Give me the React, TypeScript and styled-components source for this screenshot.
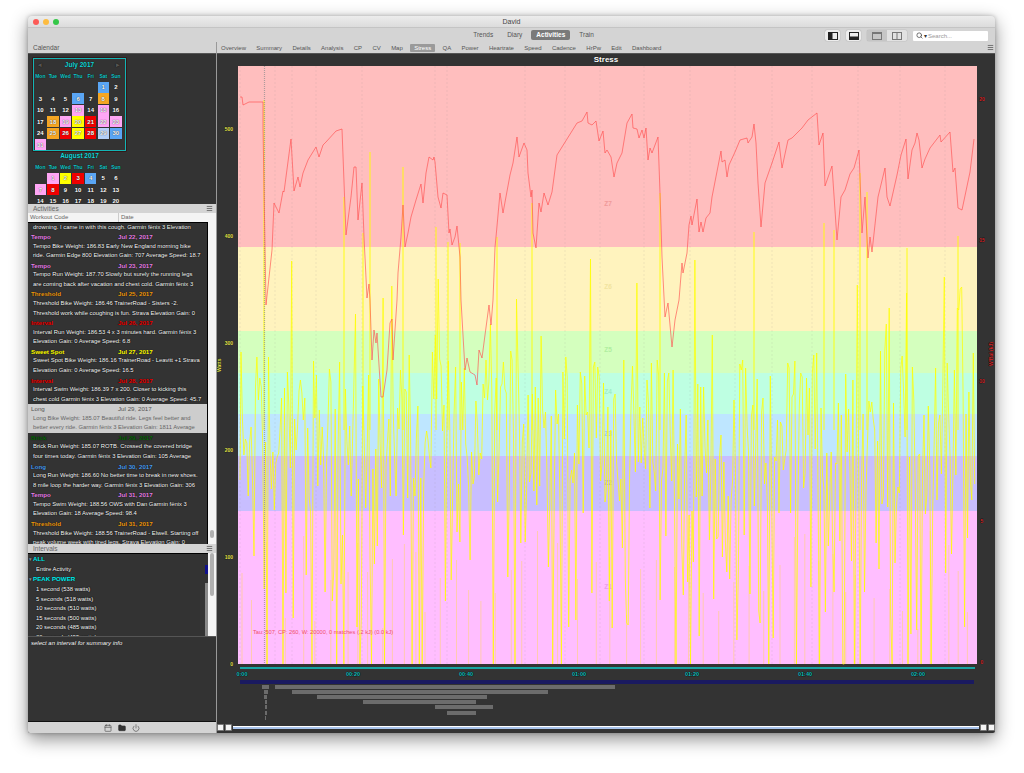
import React, {FunctionComponent} from "react";
import styled, {createGlobalStyle} from "styled-components";
import {Calendar as CalendarIcon, Folder, Menu, Power, Search} from "lucide-react";

const FONT = `"Liberation Sans", Arial, sans-serif`;

const GlobalStyle = createGlobalStyle`
  html, body {
    margin: 0;
    height: 100%;
    background: #fff;
    overflow: hidden;
  }
  body {
    font-family: ${FONT};
  }
`;

const SECTIONS = ["Trends", "Diary", "Activities", "Train"];
const TABS = ["Overview", "Summary", "Details", "Analysis", "CP", "CV", "Map", "Stress", "QA", "Power", "Heartrate", "Speed", "Cadence", "HrPw", "Edit", "Dashboard"];

const BLUE = "#5aa6f5", ORANGE = "#f5a623", PINK = "#ffa6f5", YELLOW = "#ffff00", RED = "#f00000", PALE = "#b4d0f7";

const JULY: Record<number, string> = {1: BLUE, 6: BLUE, 8: ORANGE, 13: PINK, 15: PINK, 18: ORANGE, 19: PINK, 20: YELLOW, 21: RED, 22: PINK, 23: PINK, 25: ORANGE, 26: RED, 27: YELLOW, 28: RED, 29: PALE, 30: BLUE, 31: PINK};
const AUGUST: Record<number, string> = {1: PINK, 2: YELLOW, 3: RED, 4: BLUE, 7: PINK, 8: RED};

const TEMPO = "#e67fe6", THRESHOLD = "#f09a10", INTERVAL = "#f00000", SWEET = "#ffff00", LONG = "#4a9cf0", BRICK = "#0c6a0c";

const ACTIVITIES = [
    {name: "Tempo", date: "Jul 22, 2017", color: TEMPO, lines: ["Tempo Bike Weight: 186.83 Early New England morning bike", "ride. Garmin Edge 800 Elevation Gain: 707 Average Speed: 18.7"]},
    {name: "Tempo", date: "Jul 23, 2017", color: TEMPO, lines: ["Tempo Run Weight: 187.70 Slowly but surely the running legs", "are coming back after vacation and chest cold. Garmin fēnix 3"]},
    {name: "Threshold", date: "Jul 25, 2017", color: THRESHOLD, lines: ["Threshold Bike Weight: 186.46 TrainerRoad - Sisters -2.", "Threshold work while coughing is fun. Strava Elevation Gain: 0"]},
    {name: "Interval", date: "Jul 26, 2017", color: INTERVAL, lines: ["Interval Run Weight: 186.53 4 x 3 minutes hard. Garmin fēnix 3", "Elevation Gain: 0 Average Speed: 6.8"]},
    {name: "Sweet Spot", date: "Jul 27, 2017", color: SWEET, lines: ["Sweet Spot Bike Weight: 186.16 TrainerRoad - Leavitt +1 Strava", "Elevation Gain: 0 Average Speed: 16.5"]},
    {name: "Interval", date: "Jul 28, 2017", color: INTERVAL, lines: ["Interval Swim Weight: 186.39 7 x 200. Closer to kicking this", "chest cold Garmin fēnix 3 Elevation Gain: 0 Average Speed: 45.7"]},
    {name: "Long", date: "Jul 29, 2017", color: "#555", selected: true, lines: ["Long Bike Weight: 185.07 Beautiful ride. Legs feel better and", "better every ride. Garmin fēnix 3 Elevation Gain: 1811 Average"]},
    {name: "Brick", date: "Jul 29, 2017", color: BRICK, lines: ["Brick Run Weight: 185.07 ROTB. Crossed the covered bridge", "four times today. Garmin fēnix 3 Elevation Gain: 105 Average"]},
    {name: "Long", date: "Jul 30, 2017", color: LONG, lines: ["Long Run Weight: 186.60 No better time to break in new shoes.", "8 mile loop the harder way. Garmin fēnix 3 Elevation Gain: 306"]},
    {name: "Tempo", date: "Jul 31, 2017", color: TEMPO, lines: ["Tempo Swim Weight: 188.56 OWS with Dan Garmin fēnix 3", "Elevation Gain: 18 Average Speed: 98.4"]},
    {name: "Threshold", date: "Jul 31, 2017", color: THRESHOLD, lines: ["Threshold Bike Weight: 188.56 TrainerRoad - Elwell. Starting off", "peak volume week with tired legs. Strava Elevation Gain: 0"]},
];

const PEAKS = ["1 second (538 watts)", "5 seconds (518 watts)", "10 seconds (510 watts)", "15 seconds (500 watts)", "20 seconds (485 watts)", "30 seconds (455 watts)"];

const ZONES = [
    {name: "Z7", top: 66, bottom: 247, fill: "#ffbebe", ink: "#f09a9a", labelY: 206},
    {name: "Z6", top: 247, bottom: 331, fill: "#fff3be", ink: "#f2e4a0", labelY: 289},
    {name: "Z5", top: 331, bottom: 373, fill: "#d4ffbe", ink: "#b0eea0", labelY: 352},
    {name: "Z4", top: 373, bottom: 414, fill: "#beffe2", ink: "#a0eec8", labelY: 394},
    {name: "Z3", top: 414, bottom: 456, fill: "#bee6ff", ink: "#9cc8e8", labelY: 436},
    {name: "Z2", top: 456, bottom: 511, fill: "#c8beff", ink: "#a89cec", labelY: 485},
    {name: "Z1", top: 511, bottom: 664, fill: "#ffbeff", ink: "#eaa0ea", labelY: 589},
];

const STRESS_LINE = "240,97 242,97 243,105 249,102 261,102 263,102 263,128 266,305 272,250 274,203 279,213 283,191 284,192 291,139 294,191 298,177 300,187 303,173 308,160 316,147 319,157 323,145 326,142 336,131 342,129 346,235 351,197 354,167 356,167 358,220 362,183 364,237 367,298 369,284 370,300 372,360 374,330 376,343 377,333 381,397 383,397 387,370 390,323 392,319 393,360 397,300 398,273 401,237 403,205 405,247 408,233 411,217 416,200 421,184 423,203 426,173 429,157 433,160 434,157 435,162 438,197 441,208 443,193 447,195 449,233 450,229 452,245 455,237 457,226 460,257 461,300 465,370 467,358 470,372 475,375 477,385 479,350 482,358 485,335 489,305 491,325 493,300 495,247 496,237 500,193 503,213 510,175 513,163 517,137 519,157 524,143 527,150 528,173 531,197 532,190 533,233 536,248 539,203 541,212 544,193 548,205 552,192 557,155 577,123 582,121 587,112 588,123 592,125 596,121 599,141 603,131 605,153 607,150 611,157 614,177 617,163 622,153 627,123 632,114 633,128 637,129 639,138 642,130 644,138 646,128 648,160 650,148 652,153 658,137 660,193 662,257 665,317 668,303 672,347 675,320 679,300 682,263 683,273 687,253 689,225 691,216 692,225 697,199 699,232 701,222 703,232 706,218 710,213 712,197 721,151 722,162 725,160 727,177 729,165 735,152 740,140 747,138 748,143 752,137 754,124 756,143 758,183 761,227 765,183 772,163 779,142 782,168 788,140 792,138 802,128 808,120 817,113 819,145 823,133 825,186 832,166 837,240 841,197 845,190 850,174 854,168 859,150 862,233 865,197 868,258 870,237 872,252 878,197 885,168 887,197 890,206 897,175 901,155 906,139 908,179 912,150 915,143 917,133 919,140 922,168 925,159 930,148 940,135 941,142 950,132 953,172 955,168 958,208 962,210 970,172 974,139";

const BIG_SPIKES = [[264, 100], [344, 197], [363, 233], [370, 152], [403, 167], [436, 227], [448, 242], [460, 243], [497, 237], [532, 203], [660, 193], [754, 232], [824, 223], [834, 230], [860, 173], [867, 192], [907, 248], [958, 236]];

const INTERVAL_BARS = [
    [275, 615, 685], [262, 269, 685],
    [292, 548, 690], [264, 268, 690],
    [317, 487, 695], [264, 267, 695],
    [363, 476, 700], [265, 267, 700],
    [435, 493, 705], [265, 267, 705],
    [447, 476, 711], [265, 267, 711],
    [265, 266, 716],
];

const MARKERS = [240, 275, 292, 316, 362, 435, 447, 525, 565, 600, 644, 690, 735, 772, 812, 858, 900, 945];
const TIME_TICKS = [["0:00", 242], ["00:20", 353], ["00:40", 466], ["01:00", 579], ["01:20", 692], ["01:40", 805], ["02:00", 918]] as const;
const WATT_TICKS = [[500, 129], [400, 236], [300, 343], [200, 450], [100, 557], [0, 664]];
const RIGHT_TICKS = [[20, 99], [15, 240], [10, 381], [5, 521], [0, 662]];

// seeded, so the picture is the same on every load
const makeRandom = (seed: number) => () => {
    seed = (seed + 0x6d2b79f5) | 0;
    let t = Math.imul(seed ^ (seed >>> 15), 1 | seed);
    t = (t + Math.imul(t ^ (t >>> 7), 61 | t)) ^ t;
    return ((t ^ (t >>> 14)) >>> 0) / 4294967296;
};

const buildPower = () => {
    const rand = makeRandom(2017);
    let d = "M240 480";
    for(let x = 241; x < 975; x += 1.45) {
        const r = rand();
        let y = 350 + rand() * 165;
        if(r < 0.03) y = 255 + rand() * 85;
        else if(r < 0.09) y = 664;
        else if(r < 0.22) y = 530 + rand() * 110;
        d += `L${x.toFixed(1)} ${y.toFixed(0)}`;
    }
    return d;
};

const buildPale = () => {
    const rand = makeRandom(77);
    let d = "";
    for(let x = 242; x < 975; x += 9 + rand() * 12) {
        d += `M${x.toFixed(1)} 664V${(530 + rand() * 100).toFixed(0)}`;
    }
    return d;
};

const POWER_PATH = buildPower();
const PALE_PATH = buildPale();

const Month: FunctionComponent<{title: string, offset: number, days: number, colors: Record<number, string>, boxed?: boolean}> = ({title, offset, days, colors, boxed}) => (
    <MonthBox $boxed={boxed}>
        <MonthTitle>
            <MonthArrow>{boxed && "◂"}</MonthArrow>
            {title}
            <MonthArrow>{boxed && "▸"}</MonthArrow>
        </MonthTitle>
        <DayGrid>
            {["Mon", "Tue", "Wed", "Thu", "Fri", "Sat", "Sun"].map(d => <WeekDay key={d}>{d}</WeekDay>)}
            {Array.from({length: offset}, (_, i) => <span key={i} />)}
            {Array.from({length: days}, (_, i) => <Day key={i} $color={colors[i + 1]}>{i + 1}</Day>)}
        </DayGrid>
    </MonthBox>
);

const ToolGlyph: FunctionComponent<{kind: "left" | "bottom" | "single" | "split"}> = ({kind}) => (
    <svg width="10" height="8" viewBox="0 0 10 8">
        <rect x="0.5" y="0.5" width="9" height="7" fill="none" stroke={kind === "left" || kind === "bottom" ? "#222" : "#777"} />
        {kind === "left" && <rect x="1" y="1" width="3.5" height="6" fill="#222" />}
        {kind === "bottom" && <rect x="1" y="4.5" width="8" height="2.5" fill="#222" />}
        {kind === "single" && <rect x="1" y="1" width="8" height="1" fill="#777" />}
        {kind === "split" && <path d="M5 1v6" stroke="#777" />}
    </svg>
);

const StressChart: FunctionComponent = () => (
    <Chart viewBox="217 65 778 657" width="778" height="657">
        {ZONES.map(z => <rect key={z.name} x="238" y={z.top} width="739" height={z.bottom - z.top} fill={z.fill} />)}
        {ZONES.map(z => <ZoneLabel key={z.name} x="608" y={z.labelY} fill={z.ink}>{z.name}</ZoneLabel>)}
        {MARKERS.map(x => <line key={x} x1={x} x2={x} y1="66" y2="664" stroke="#999" strokeOpacity="0.3" strokeWidth="0.5" strokeDasharray="2 2" />)}
        <path d={PALE_PATH} stroke="#ffd27a" strokeWidth="0.8" fill="none" opacity="0.75" />
        <path d={POWER_PATH} stroke="#ffff00" strokeWidth="0.75" fill="none" />
        {BIG_SPIKES.map(([x, y]) => <line key={x} x1={x} x2={x} y1={y} y2="430" stroke="#ffff00" strokeWidth="0.9" />)}
        <line x1="264.5" x2="264.5" y1="66" y2="664" stroke="#8c8c8c" strokeWidth="1.2" strokeDasharray="1 1" opacity="0.7" />
        <polyline points={STRESS_LINE} fill="none" stroke="#ff4d4d" strokeWidth="0.75" opacity="0.85" />
        <TauText x="253" y="634">Tau: 507, CP: 260, W: 20000, 0 matches (.2 kJ) (0.0 kJ)</TauText>

        {WATT_TICKS.map(([v, y]) => <AxisText key={v} x="233" y={y + 2} textAnchor="end" fill="#e6e650">{v}</AxisText>)}
        <AxisText x="0" y="0" transform="translate(221 372) rotate(-90)" fill="#e6e650">Watts</AxisText>
        {RIGHT_TICKS.map(([v, y]) => <AxisText key={v} x="982" y={y + 2} textAnchor="middle" fill="#d82828">{v}</AxisText>)}
        <AxisText x="0" y="0" transform="translate(993 366) rotate(-90)" fill="#d82828">W'Bal (kJ)</AxisText>

        <rect x="240" y="667" width="735" height="2" fill="#16a5a5" />
        {TIME_TICKS.map(([t, x]) => <TimeText key={t} x={x} y="676" textAnchor="middle">{t}</TimeText>)}
        <rect x="240" y="680" width="734" height="4" fill="#1a1a60" />
        {INTERVAL_BARS.map(([a, b, y]) => <rect key={`${a}-${y}`} x={a} y={y} width={b - a} height="4" fill="#6c6c6c" />)}
    </Chart>
);

export default function App() {
    return (
        <Page>
            <GlobalStyle />
            <Window>
                <TitleBar>
                    <Lights>
                        <Light $color="#fc5b57" />
                        <Light $color="#fdbc40" />
                        <Light $color="#34c748" />
                    </Lights>
                    David
                </TitleBar>
                <Toolbar>
                    <Sections>
                        {SECTIONS.map(s => <SectionButton key={s} $active={s === "Activities"}>{s}</SectionButton>)}
                    </Sections>
                    <ToolGroup>
                        <ToolButton><ToolGlyph kind="left" /></ToolButton>
                        <ToolButton><ToolGlyph kind="bottom" /></ToolButton>
                        <Segmented>
                            <Segment $on><ToolGlyph kind="single" /></Segment>
                            <Segment><ToolGlyph kind="split" /></Segment>
                        </Segmented>
                        <SearchField>
                            <Search size={7} color="#444" strokeWidth={2.5} />
                            <SearchCaret>▾</SearchCaret>
                            Search...
                        </SearchField>
                    </ToolGroup>
                </Toolbar>
                <Body>
                    <Sidebar>
                        <CalendarHeader>Calendar</CalendarHeader>
                        <CalendarPane>
                            <Month title="July 2017" offset={5} days={31} colors={JULY} boxed />
                            <Month title="August 2017" offset={1} days={20} colors={AUGUST} />
                        </CalendarPane>
                        <PanelHeader>Activities<Menu size={7} color="#666" strokeWidth={3} /></PanelHeader>
                        <ColumnHeader>
                            <ColumnCell>Workout Code</ColumnCell>
                            <ColumnCell>Date</ColumnCell>
                        </ColumnHeader>
                        <ActivityPane>
                            <ActivityList>
                                <ActivityRow>
                                    <ActivityLine>drowning. I came in with this cough. Garmin fēnix 3 Elevation</ActivityLine>
                                </ActivityRow>
                                {ACTIVITIES.map(a => (
                                    <ActivityRow key={a.name + a.date} $selected={a.selected}>
                                        <ActivityTop $color={a.color} $selected={a.selected}>
                                            <span>{a.name}</span>
                                            <span>{a.date}</span>
                                        </ActivityTop>
                                        {a.lines.map(l => <ActivityLine key={l} $selected={a.selected}>{l}</ActivityLine>)}
                                    </ActivityRow>
                                ))}
                            </ActivityList>
                            <ScrollTrack>
                                <ScrollThumb $top={308} $height={8} />
                            </ScrollTrack>
                        </ActivityPane>
                        <PanelHeader>Intervals<Menu size={7} color="#666" strokeWidth={3} /></PanelHeader>
                        <IntervalPane>
                            <IntervalList>
                                <IntervalGroup><IntervalCaret>▾</IntervalCaret>ALL</IntervalGroup>
                                <IntervalItem>Entire Activity<SelectionMark /></IntervalItem>
                                <IntervalGroup><IntervalCaret>▾</IntervalCaret>PEAK POWER</IntervalGroup>
                                {PEAKS.map(p => <IntervalItem key={p}>{p}</IntervalItem>)}
                                <TreeGutter />
                            </IntervalList>
                            <ScrollTrack>
                                <ScrollThumb $top={0} $height={43} />
                            </ScrollTrack>
                        </IntervalPane>
                        <SummaryPane>select an interval for summary info</SummaryPane>
                        <SideFooter>
                            <CalendarIcon size={8} color="#555" strokeWidth={2} />
                            <Folder size={8} color="#333" fill="#333" />
                            <Power size={8} color="#555" strokeWidth={2} />
                        </SideFooter>
                    </Sidebar>
                    <Main>
                        <TabBar>
                            {TABS.map(t => <Tab key={t} $active={t === "Stress"}>{t}</Tab>)}
                            <TabMenu><Menu size={7} color="#666" strokeWidth={3} /></TabMenu>
                        </TabBar>
                        <ChartPane>
                            <ChartTitle>Stress</ChartTitle>
                            <StressChart />
                            <Slider>
                                <Handle /><Handle />
                                <SliderTrack />
                                <Handle /><Handle />
                            </Slider>
                        </ChartPane>
                    </Main>
                </Body>
            </Window>
        </Page>
    );
}

const Page = styled.div`
  padding: 16px 0 0 28px;
  height: 773px;
  box-sizing: border-box;
`;

const Window = styled.div`
  width: 967px;
  height: 717px;
  display: flex;
  flex-direction: column;
  background: #d4d4d4;
  border-radius: 4px 4px 2px 2px;
  box-shadow: 0 6px 18px rgba(0, 0, 0, 0.45), 0 0 4px rgba(0, 0, 0, 0.25);
  overflow: hidden;
`;

const TitleBar = styled.div`
  position: relative;
  height: 11px;
  flex: none;
  background: linear-gradient(#ececec, #dcdcdc);
  border-bottom: 1px solid #c4c4c4;
  font-size: 7px;
  line-height: 11px;
  text-align: center;
  color: #444;
`;

const Lights = styled.div`
  position: absolute;
  left: 5px;
  top: 3px;
  display: flex;
  gap: 4px;
`;

const Light = styled.span<{$color: string}>`
  width: 6px;
  height: 6px;
  border-radius: 50%;
  background: ${p => p.$color};
`;

const Toolbar = styled.div`
  position: relative;
  height: 14px;
  flex: none;
  display: flex;
  justify-content: center;
  align-items: center;
`;

const Sections = styled.div`
  display: flex;
  align-items: center;
  gap: 4px;
  margin-left: 44px;
`;

const SectionButton = styled.div<{$active?: boolean}>`
  font-size: 6.5px;
  line-height: 10px;
  padding: 0 5px;
  border-radius: 2px;
  color: ${p => p.$active ? "#fff" : "#555"};
  background: ${p => p.$active ? "#7a7a7a" : "transparent"};
  font-weight: ${p => p.$active ? 700 : 400};
`;

const ToolGroup = styled.div`
  position: absolute;
  right: 7px;
  top: 2px;
  display: flex;
  align-items: center;
  gap: 6px;
`;

const ToolButton = styled.div`
  width: 15px;
  height: 11px;
  display: flex;
  align-items: center;
  justify-content: center;
  background: #ededed;
  border-radius: 2px;
  box-shadow: 0 0 1px rgba(0, 0, 0, 0.4);
`;

const Segmented = styled.div`
  display: flex;
  border-radius: 2px;
  overflow: hidden;
  box-shadow: 0 0 1px rgba(0, 0, 0, 0.4);
`;

const Segment = styled.div<{$on?: boolean}>`
  width: 20px;
  height: 11px;
  display: flex;
  align-items: center;
  justify-content: center;
  background: ${p => p.$on ? "#c6c6c6" : "#e2e2e2"};
`;

const SearchField = styled.div`
  width: 75px;
  height: 10px;
  box-sizing: border-box;
  display: flex;
  align-items: center;
  gap: 1px;
  padding-left: 3px;
  background: #fff;
  border-radius: 1px;
  font-size: 6px;
  color: #999;
`;

const SearchCaret = styled.span`
  color: #333;
  font-size: 6px;
`;

const Body = styled.div`
  flex: 1;
  min-height: 0;
  display: flex;
`;

const Sidebar = styled.div`
  width: 188px;
  flex: none;
  display: flex;
  flex-direction: column;
  background: #333;
`;

const CalendarHeader = styled.div`
  height: 11px;
  flex: none;
  background: #d4d4d4;
  border-bottom: 1px solid #555;
  font-size: 6.5px;
  line-height: 11px;
  padding-left: 5px;
  color: #555;
`;

const CalendarPane = styled.div`
  height: 150px;
  flex: none;
  overflow: hidden;
  padding: 4px 0 0 5px;
  box-sizing: border-box;
`;

const MonthBox = styled.div<{$boxed?: boolean}>`
  width: 93px;
  box-sizing: border-box;
  height: ${p => p.$boxed ? "93px" : "auto"};
  margin-bottom: ${p => p.$boxed ? "-2px" : "0"};
  border: 1px solid ${p => p.$boxed ? "#14b4b4" : "transparent"};
  box-shadow: ${p => p.$boxed ? "0 0 0 0.5px #300" : "none"};
`;

const MonthTitle = styled.div`
  height: 11px;
  display: flex;
  justify-content: space-between;
  align-items: center;
  padding: 0 4px;
  font-size: 6.5px;
  font-weight: 700;
  color: #14d8d8;
  text-shadow: 0 0 1px #000;
`;

const MonthArrow = styled.span`
  color: #555;
  font-size: 7px;
  min-width: 5px;
`;

const DayGrid = styled.div`
  display: grid;
  grid-template-columns: repeat(7, 12.6px);
  grid-auto-rows: 11.5px;
  justify-items: center;
  align-items: center;
`;

const WeekDay = styled.div`
  font-size: 5px;
  font-weight: 700;
  color: #14c8c8;
  text-shadow: 0 0 1px #000;
`;

const Day = styled.div<{$color?: string}>`
  width: 11.5px;
  height: 11px;
  display: flex;
  align-items: center;
  justify-content: center;
  font-size: 6px;
  font-weight: 700;
  color: #fff;
  text-shadow: 0 0 1px #000;
  background: ${p => p.$color ?? "transparent"};
`;

const PanelHeader = styled.div`
  height: 9px;
  flex: none;
  display: flex;
  align-items: center;
  justify-content: space-between;
  padding: 0 3px 0 5px;
  background: #d4d4d4;
  font-size: 6.5px;
  color: #666;
`;

const ColumnHeader = styled.div`
  height: 9px;
  flex: none;
  display: grid;
  grid-template-columns: 90px 1fr;
  background: #f4f4f4;
`;

const ColumnCell = styled.div`
  font-size: 6px;
  line-height: 9px;
  padding-left: 2px;
  color: #666;
  & + & {
    border-left: 1px solid #ccc;
  }
`;

const ActivityPane = styled.div`
  height: 322px;
  flex: none;
  display: flex;
`;

const ActivityList = styled.div`
  flex: 1;
  min-width: 0;
  overflow: hidden;
  background: #333;
  border-top: 1px solid #000;
  border-right: 1px solid #000;
  margin-top: -0.5px;
`;

const ActivityRow = styled.div<{$selected?: boolean}>`
  background: ${p => p.$selected ? "#cdcdcd" : "transparent"};
  margin: ${p => p.$selected ? "0 -1px 0 0" : "0"};
`;

const ActivityTop = styled.div<{$color: string, $selected?: boolean}>`
  display: grid;
  grid-template-columns: 87px 1fr;
  padding-left: 3px;
  font-size: 6.2px;
  line-height: 9.57px;
  font-weight: ${p => p.$selected ? 400 : 700};
  color: ${p => p.$color};
  text-shadow: ${p => p.$selected ? "none" : "0 0 1px #000"};
`;

const ActivityLine = styled.div<{$selected?: boolean}>`
  padding-left: 5px;
  font-size: 5.85px;
  line-height: 9.57px;
  white-space: nowrap;
  overflow: hidden;
  color: ${p => p.$selected ? "#666" : "#fff"};
  text-shadow: ${p => p.$selected ? "none" : "0 0 1px #000, 0 0 1px #000"};
`;

const ScrollTrack = styled.div`
  width: 8px;
  flex: none;
  background: #f4f4f4;
  display: flex;
  justify-content: center;
`;

const ScrollThumb = styled.div<{$top: number, $height: number}>`
  width: 4px;
  height: ${p => p.$height}px;
  margin-top: ${p => p.$top}px;
  background: #b0b0b0;
  border-radius: 2px;
`;

const IntervalPane = styled.div`
  height: 84px;
  flex: none;
  display: flex;
  border-bottom: 1px solid #555;
  box-sizing: border-box;
`;

const IntervalList = styled.div`
  position: relative;
  flex: 1;
  min-width: 0;
  overflow: hidden;
  border-top: 1px solid #000;
  box-sizing: border-box;
`;

const IntervalGroup = styled.div`
  padding-left: 1px;
  font-size: 6.2px;
  line-height: 9.7px;
  font-weight: 700;
  color: #00f0f0;
  text-shadow: 0 0 1px #000;
`;

const IntervalCaret = styled.span`
  color: #888;
  font-size: 5px;
  margin-right: 1px;
`;

const IntervalItem = styled.div`
  position: relative;
  padding-left: 8px;
  font-size: 5.85px;
  line-height: 9.6px;
  color: #fff;
  text-shadow: 0 0 1px #000, 0 0 1px #000;
`;

const SelectionMark = styled.span`
  position: absolute;
  right: 0;
  top: 0;
  width: 3px;
  height: 9px;
  background: #10108c;
`;

const TreeGutter = styled.span`
  position: absolute;
  right: 0;
  top: 29px;
  bottom: 0;
  width: 3px;
  background: #888;
`;

const SummaryPane = styled.div`
  flex: 1;
  padding: 2px 3px;
  font-size: 6px;
  line-height: 9px;
  font-style: italic;
  color: #fff;
  text-shadow: 0 0 1px #000;
  background: #333;
  border-bottom: 1px solid #111;
`;

const SideFooter = styled.div`
  height: 11px;
  flex: none;
  display: flex;
  align-items: center;
  justify-content: center;
  gap: 6px;
  background: #d4d4d4;
`;

const Main = styled.div`
  flex: 1;
  min-width: 0;
  display: flex;
  flex-direction: column;
  border-left: 1px solid #999;
`;

const TabBar = styled.div`
  position: relative;
  height: 11px;
  flex: none;
  display: flex;
  align-items: center;
  gap: 2.35px;
  background: #d4d4d4;
  border-bottom: 1px solid #555;
`;

const Tab = styled.div<{$active?: boolean}>`
  font-size: 6px;
  line-height: 8px;
  padding: 0 4px;
  margin: ${p => p.$active ? "0 1px" : "0"};
  border-radius: 1px;
  color: ${p => p.$active ? "#fff" : "#555"};
  background: ${p => p.$active ? "#9a9a9a" : "transparent"};
`;

const TabMenu = styled.div`
  position: absolute;
  right: 1px;
  top: 2px;
  line-height: 0;
`;

const ChartPane = styled.div`
  flex: 1;
  min-height: 0;
  display: flex;
  flex-direction: column;
  background: #333;
`;

const ChartTitle = styled.div`
  height: 11px;
  flex: none;
  text-align: center;
  font-size: 8px;
  line-height: 12px;
  font-weight: 700;
  color: #fff;
  text-shadow: 0 0 1px #000;
`;

const Chart = styled.svg`
  flex: none;
  display: block;
  font-family: ${FONT};
`;

const ZoneLabel = styled.text`
  font-size: 6.5px;
  font-weight: 700;
  text-anchor: middle;
`;

const TauText = styled.text`
  font-size: 5.7px;
  fill: #f0506e;
`;

const AxisText = styled.text`
  font-size: 5px;
  font-weight: 700;
  paint-order: stroke;
  stroke: #000;
  stroke-width: 0.4px;
`;

const TimeText = styled.text`
  font-size: 5.5px;
  font-weight: 700;
  fill: #14c0c0;
  paint-order: stroke;
  stroke: #000;
  stroke-width: 0.5px;
`;

const Slider = styled.div`
  flex: 1;
  display: flex;
  align-items: center;
  gap: 1px;
`;

const Handle = styled.div`
  width: 7px;
  height: 7px;
  flex: none;
  background: #f4f4f4;
  border: 1px solid #777;
  border-radius: 1px;
  box-sizing: border-box;
`;

const SliderTrack = styled.div`
  flex: 1;
  height: 3px;
  background: #a9c4ec;
  border-top: 1px solid #fff;
  box-sizing: border-box;
`;
